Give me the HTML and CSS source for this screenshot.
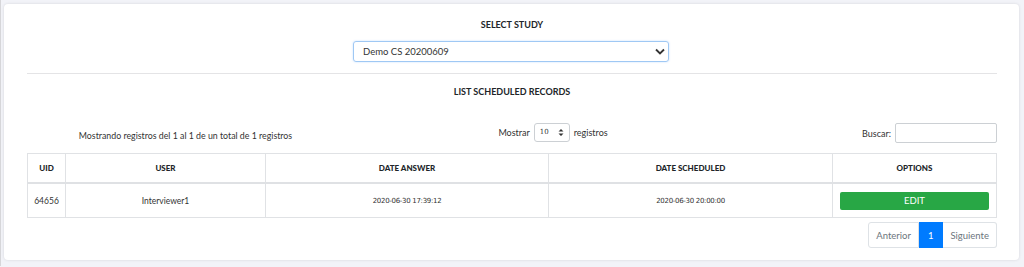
FILE: index.html
```html
<!DOCTYPE html>
<html lang="en">
<head>
    <meta charset="UTF-8">
    <meta name="viewport" content="width=device-width, initial-scale=1.0">
    <title>Scheduled Records</title>
    <link rel="stylesheet" href="styles.css">
</head>
<body>
    <div class="page">
        <div class="card">
            <h5 class="section-title">Select Study</h5>
            <div class="study-row">
                <div class="study-select">
                    <span>Demo CS 20200609</span>
                    <svg width="10" height="7" viewBox="0 0 10 7"><path d="M1 1.5 L5 5.5 L9 1.5" fill="none" stroke="#333" stroke-width="1.8"/></svg>
                </div>
            </div>
            <hr class="divider">
            <h5 class="section-title list-title">List Scheduled Records</h5>

            <div class="controls">
                <div class="info">Mostrando registros del 1 al 1 de un total de 1 registros</div>
                <div class="length">
                    Mostrar
                    <span class="length-select">10
                        <svg width="6" height="9" viewBox="0 0 6 9"><path d="M0.5 3.5 L3 1 L5.5 3.5 Z M0.5 5.5 L3 8 L5.5 5.5 Z" fill="#333"/></svg>
                    </span>
                    registros
                </div>
                <div class="search">
                    Buscar:
                    <span class="search-input"></span>
                </div>
            </div>

            <table class="records">
                <thead>
                    <tr>
                        <th class="col-uid">UID</th>
                        <th class="col-user">USER</th>
                        <th class="col-answer">DATE ANSWER</th>
                        <th class="col-scheduled">DATE SCHEDULED</th>
                        <th>OPTIONS</th>
                    </tr>
                </thead>
                <tbody>
                    <tr>
                        <td>64656</td>
                        <td>Interviewer1</td>
                        <td class="mono">2020-06-30 17:39:12</td>
                        <td class="mono">2020-06-30 20:00:00</td>
                        <td><span class="btn-edit">EDIT</span></td>
                    </tr>
                </tbody>
            </table>

            <div class="pager">
                <span class="page-link">Anterior</span>
                <span class="page-link active">1</span>
                <span class="page-link">Siguiente</span>
            </div>
        </div>
    </div>
</body>
</html>
```

FILE: styles.css
```css
body {
    margin: 0;
    background-color: #f2f3f8;
    font-family: Lato, "Open Sans", sans-serif;
    color: #333;
}
.page {
    padding: 4px 5px 6px 3px;
    border-left: 1px solid #d6d6d9;
}
.card {
    background-color: #ffffff;
    border-radius: 4px;
    box-shadow: 0 0 3px rgba(0, 0, 0, 0.12);
    padding: 15px 22px 12px 23px;
}
.section-title {
    margin: 0;
    text-align: center;
    font-size: 9px;
    font-weight: bold;
    line-height: 12px;
    text-transform: uppercase;
    color: #212529;
}
.study-row {
    display: flex;
    justify-content: center;
    margin-top: 10px;
}
.study-select {
    width: 302px;
    height: 19px;
    margin-left: -2px;
    border: 1px solid #9fc8f4;
    border-radius: 3px;
    box-shadow: 0 0 2px rgba(0, 123, 255, 0.25);
    display: flex;
    align-items: center;
    justify-content: space-between;
    padding: 0 3px 0 9px;
    font-size: 9.5px;
    color: #333;
}
.divider {
    border: 0;
    border-top: 1px solid #e4e4e6;
    margin: 11px 0 12px 0;
}
.controls {
    display: flex;
    align-items: center;
    margin-top: 25px;
    height: 20px;
    font-size: 9px;
    color: #333;
}
.info {
    width: 317px;
    text-align: center;
    padding-top: 4px;
    font-size: 8.8px;
}
.length {
    flex: 1;
    display: flex;
    align-items: center;
    justify-content: center;
    gap: 4px;
    padding-right: 100px;
    padding-bottom: 2px;
}
.length-select {
    display: inline-flex;
    align-items: center;
    justify-content: space-between;
    width: 24px;
    height: 17px;
    padding: 0 5px;
    border: 1px solid #ccd0d4;
    border-radius: 3px;
    font-size: 7px;
    font-family: "DejaVu Serif", serif;
}
.search {
    display: flex;
    align-items: center;
    gap: 4px;
}
.search-input {
    display: inline-block;
    width: 100px;
    height: 18px;
    border: 1px solid #ccd0d4;
    border-radius: 2px;
}
.records {
    width: 100%;
    border-collapse: collapse;
    margin-top: 10px;
    font-size: 8.5px;
    color: #333;
}
.records th,
.records td {
    border: 1px solid #e0e2e5;
    text-align: center;
    padding: 0;
}
.records th {
    height: 28px;
    font-weight: 900;
    font-size: 8px;
    color: #212529;
    border-bottom: 2px solid #dfe1e4;
}
.records td {
    height: 33px;
}
.col-uid { width: 37px; }
.col-user { width: 199px; }
.col-answer { width: 282px; }
.col-scheduled { width: 283px; }
.mono {
    font-family: "DejaVu Sans", sans-serif;
    font-size: 7px;
    letter-spacing: -0.3px;
}
.btn-edit {
    display: block;
    margin: 0 7px;
    height: 18px;
    line-height: 18px;
    background-color: #28a745;
    border-radius: 2px;
    color: #fff;
    font-size: 9.5px;
}
.pager {
    display: flex;
    justify-content: flex-end;
    margin-top: 4px;
}
.page-link {
    display: inline-flex;
    align-items: center;
    height: 24px;
    padding: 0 7px;
    border: 1px solid #dee2e6;
    font-size: 9.5px;
    color: #6c757d;
}
.page-link + .page-link {
    border-left: 0;
}
.page-link:first-child {
    border-radius: 3px 0 0 3px;
}
.page-link:last-child {
    border-radius: 0 3px 3px 0;
}
.page-link.active {
    background-color: #007bff;
    border-color: #007bff;
    color: #fff;
    padding: 0 9px;
}
```
